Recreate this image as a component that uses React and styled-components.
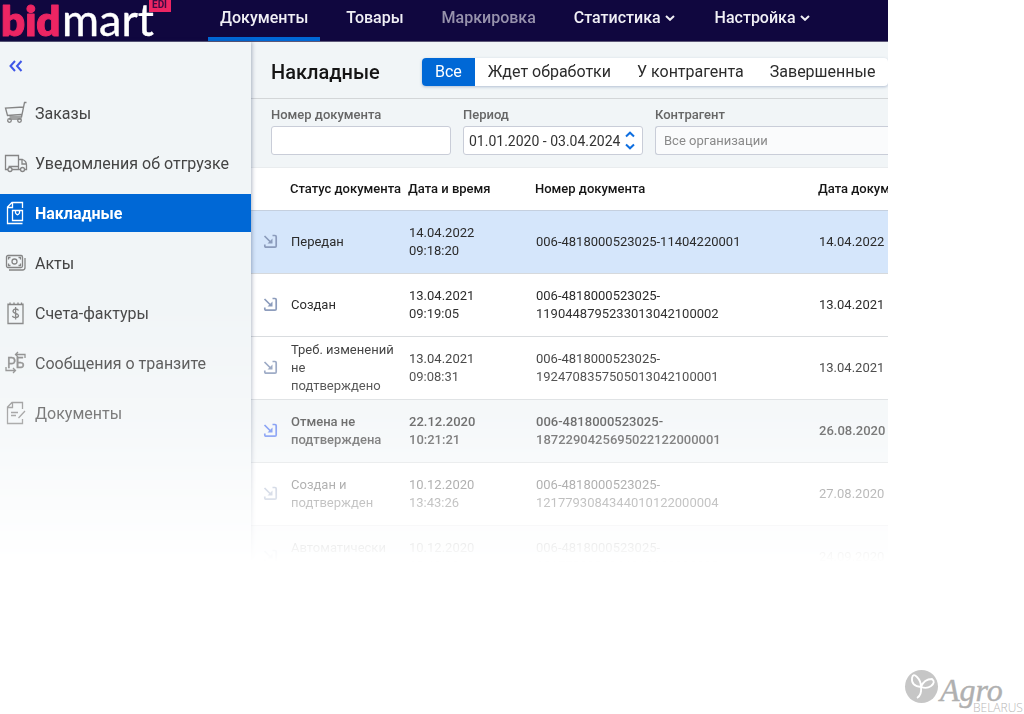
import React from "react";
import styled, { createGlobalStyle, css } from "styled-components";

const GlobalStyle = createGlobalStyle`
  *, *::before, *::after { box-sizing: border-box; }
  html, body { margin: 0; background: #fff; }
  body, button, input { font-family: Roboto, "Liberation Sans", sans-serif; }
  button { cursor: pointer; }
`;

const Page = styled.div`
  display: flex;
  flex-direction: column;
  min-height: 100vh;
  overflow: hidden;
`;

const Shell = styled.div`
  display: flex;
  flex-direction: column;
  height: 564px;
  margin-right: 136px;
  overflow: hidden;
  background: #fff;
  mask-image: linear-gradient(#000 300px, rgba(0, 0, 0, 0.85) 365px, rgba(0, 0, 0, 0.67) 425px, rgba(0, 0, 0, 0.32) 495px, transparent 562px);
`;

const TopBar = styled.header`
  display: flex;
  flex: none;
  height: 42px;
  background: #10073f;
  border-bottom: 1px solid #5d5878;
`;

const LogoLink = styled.a`
  flex: none;
  width: 208px;
  height: 41px;

  svg { display: block; overflow: visible; }
`;

const Nav = styled.nav`
  display: flex;
  gap: 14px;
`;

const NavLink = styled.a`
  display: flex;
  align-items: center;
  gap: 4px;
  height: 41px;
  padding: 0 ${(p) => (p.$menu ? "14px" : "12px")} 2px 12px;
  border-bottom: 4px solid ${(p) => (p.$active ? "#0068d6" : "transparent")};
  color: ${(p) => (p.$muted ? "#9792ac" : "#f0eff5")};
  font-size: 16px;
  font-weight: 500;
  text-decoration: none;
  white-space: nowrap;
`;

const Body = styled.div`
  display: flex;
  flex: 1;
  min-height: 0;
`;

const Sidebar = styled.aside`
  display: flex;
  flex-direction: column;
  flex: none;
  width: 251px;
  background: #f1f5f7;
  box-shadow: 1px 0 4px rgba(30, 50, 90, 0.35);
  z-index: 1;
`;

const CollapseButton = styled.button`
  display: flex;
  align-items: center;
  width: 36px;
  height: 48px;
  padding: 0 0 0 8px;
  border: 0;
  background: none;
  color: #3e56e8;
`;

const Menu = styled.nav`
  display: flex;
  flex-direction: column;
  gap: 12px;
  padding-top: 4px;
`;

const MenuLink = styled.a`
  display: flex;
  align-items: center;
  gap: 7px;
  height: 38px;
  padding-left: 4px;
  font-size: 16px;
  color: #444;
  text-decoration: none;
  white-space: nowrap;

  svg { flex: none; color: #858585; }

  ${(p) => p.$active && css`
    background: #0068d6;
    color: #fff;
    font-weight: 700;
    svg { color: #fff; }
  `}
`;

const Main = styled.main`
  flex: 1;
  min-width: 0;
  overflow: hidden;
`;

const TitleRow = styled.div`
  display: flex;
  align-items: center;
  height: 57px;
  padding: 3px 0 0 20px;
  background: #f1f5f7;
  border-bottom: 1px solid #d3d6d8;
`;

const Title = styled.h1`
  flex: none;
  width: 151px;
  margin: 0;
  font-size: 20px;
  font-weight: 500;
  color: #151515;
`;

const Segments = styled.div`
  display: flex;
  flex: 1;
  height: 28px;
  border-radius: 4px;
  background: #fff;
  box-shadow: 0 1px 3px rgba(60, 90, 140, 0.35);
  overflow: hidden;
`;

const Segment = styled.button`
  flex: none;
  padding: 0 13px;
  border: 0;
  background: ${(p) => (p.$active ? "#0068d6" : "transparent")};
  color: ${(p) => (p.$active ? "#fff" : "#2b2b2b")};
  font-size: 16px;
  white-space: nowrap;
`;

const Filters = styled.form`
  display: flex;
  gap: 12px;
  height: 69px;
  padding: 8px 0 0 20px;
  background: #f1f5f7;
  border-bottom: 1px solid #e9ecee;
`;

const Field = styled.div`
  display: flex;
  flex-direction: column;
  gap: 3px;
  flex: ${(p) => (p.$grow ? "1" : "none")};
  width: 180px;
  min-width: 0;
`;

const Label = styled.label`
  font-size: 13px;
  font-weight: 500;
  line-height: 16px;
  color: #666;
`;

const Box = styled.div`
  display: flex;
  align-items: center;
  height: 29px;
  border: 1px solid #c9cdd8;
  border-right-width: ${(p) => (p.$open ? "0" : "1px")};
  border-radius: ${(p) => (p.$open ? "3px 0 0 3px" : "3px")};
  background: ${(p) => (p.$open ? "#fafbfc" : "#fff")};
  overflow: hidden;
`;

const TextInput = styled.input`
  flex: 1;
  min-width: 0;
  height: 27px;
  padding: 0 0 0 ${(p) => (p.$wide ? "8px" : "5px")};
  border: 0;
  outline: 0;
  background: none;
  color: #333;
  font-size: ${(p) => (p.$wide ? "13px" : "14px")};

  &::placeholder { color: #8a8a8a; opacity: 1; }
`;

const Stepper = styled.div`
  display: flex;
  flex-direction: column;
  gap: 5px;
  padding-right: 7px;
`;

const StepButton = styled.button`
  display: flex;
  padding: 0;
  border: 0;
  background: none;
  color: #0f6fe0;
`;

const Table = styled.table`
  width: 760px;
  table-layout: fixed;
  border-collapse: collapse;
  font-size: 13px;
  line-height: 18px;
`;

const HeadCell = styled.th`
  width: ${(p) => (p.$width ? `${p.$width}px` : "auto")};
  height: 42px;
  padding: 0;
  text-align: left;
  font-weight: 500;
  color: #151515;
  white-space: nowrap;
`;

const Row = styled.tr`
  height: 63px;
  border-top: 1px solid ${(p) => (p.$tone === "selected" ? "#c5d0df" : "#d6d9dc")};
  background: ${(p) => ({ selected: "#d5e6fb", shaded: "#f1f5f7" }[p.$tone] || "#fff")};
  font-weight: ${(p) => (p.$strong ? 500 : 400)};
`;

const Cell = styled.td`
  padding: 0 12px 0 ${(p) => (p.$icon ? "12px" : "1px")};
  color: #2b2b2b;
  vertical-align: middle;

  svg { display: block; }
`;

const Watermark = styled.footer`
  display: flex;
  justify-content: flex-end;
  margin-top: auto;

  svg { display: block; overflow: visible; }
`;

function Logo() {
  return (
    <svg width="180" height="41" viewBox="0 0 180 41" role="img" aria-label="bidmart EDI">
      <text x="1" y="36" fill="#ec2563" stroke="#ec2563" strokeWidth="1" strokeLinejoin="round" fontFamily="Lato, sans-serif" fontSize="42" fontWeight="800">bid</text>
      <text x="62" y="36" fill="#fff" stroke="#fff" strokeWidth="0.4" strokeLinejoin="round" fontFamily="Lato, sans-serif" fontSize="45">mart</text>
      <rect x="149" y="-2" width="22" height="14" fill="#ec2563" />
      <text x="152" y="8" fill="#3d0a44" fontFamily="Roboto, sans-serif" fontSize="10" fontWeight="700">EDI</text>
    </svg>
  );
}

function Chevron({ up, small }) {
  return (
    <svg width="10" height={small ? 6 : 7} viewBox="0 0 10 6" fill="none" stroke="currentColor" strokeWidth="2">
      <path d={up ? "M1 5l4-3.800L9 5" : "M1 1l4 3.800L9 1"} />
    </svg>
  );
}

const iconPaths = {
  cart: (
    <>
      <path d="M22.500 1.500H20.500L17.500 16H5.500M19.500 6L1.500 7L3.500 14.500L17.500 13.500M5 18H17.500" />
      <circle cx="5.500" cy="19.500" r="1.800" /><circle cx="15.500" cy="19.500" r="1.800" />
    </>
  ),
  truck: (
    <>
      <path d="M4 18.500H1.500V4.500H14.500V18.500H8M14.500 8.500H18.500Q22.500 10 22.500 14V18.500H20.500M16.500 18.500H14.500M4.500 15.500H14.500M18 9V13H22" />
      <circle cx="6" cy="18.500" r="2" /><circle cx="18.500" cy="18.500" r="2" />
    </>
  ),
  invoice: (
    <>
      <path d="M18.500 7V1.500H8L3.500 6V22.500H18.500M8.500 1.500V6.500H3.500" />
      <path d="M8.500 9.500H18.500V19.500H8.500ZM11.500 9.500V12Q13.500 15.500 15.500 12V9.500" />
    </>
  ),
  money: (
    <>
      <rect x="2.500" y="4.500" width="16" height="12" rx="1.500" />
      <circle cx="10.500" cy="10.500" r="2.500" />
      <path d="M4.500 8.500V6.500H6.500M14.500 6.500H16.500V8.500M4.500 12.500V14.500H6.500M14.500 14.500H16.500V12.500M21 7V16.500Q21 19 18.500 19H5" />
    </>
  ),
  bill: (
    <>
      <path d="M4 2.500V22.500H19V2.500M4 3.500H19M6 1.500V3.500M10 1.500V3.500M14 1.500V3.500M17.500 1.500V3.500" />
      <path d="M14.500 9.500Q13.800 8 11.600 8T9 10Q9 11.700 11.600 12.300T14.500 14.500Q14.500 16.500 11.700 16.500T8.500 14.800M11.600 6V18.500" />
    </>
  ),
  note: (
    <>
      <path d="M18.500 8V1.500H8L3.500 6V22.500H18.500V18M8.500 1.500V6.500H3.500M7 11.500H14M7 14.500H12M21 10L14.500 17" />
    </>
  ),
};

function MenuIcon({ name }) {
  return (
    <svg width="24" height="24" viewBox="0 0 24 24" fill="none" stroke="currentColor" strokeWidth="1.3" overflow="visible">
      {name === "transit" ? (
        <>
          <text x="3" y="17" fill="currentColor" strokeWidth="0.4" fontFamily="Roboto, sans-serif" fontSize="14">РБ</text>
          <path d="M21 7V3.500H11.500M14 1L11.500 3.500L14 6M2 16V19.500H11.500M9 17L11.500 19.500L9 22" />
        </>
      ) : iconPaths[name]}
    </svg>
  );
}

function IncomingIcon({ bright }) {
  const color = bright ? "#4f74f0" : "#8b9bbb";
  return (
    <svg width="15" height="15" viewBox="0 0 15 15" fill="none" stroke={color} strokeWidth="1.700">
      <path d="M9.500 1.500H12Q13.200 1.500 13.200 2.700V12Q13.200 13.200 12 13.200H3Q1.800 13.200 1.800 12V10.500M1.500 2L8 8.500" />
      <path d="M9.500 4.500v5h-5z" fill={color} stroke="none" />
    </svg>
  );
}

const navItems = [
  { label: "Документы", active: true },
  { label: "Товары" },
  { label: "Маркировка", muted: true },
  { label: "Статистика", menu: true },
  { label: "Настройка", menu: true },
];

const menuItems = [
  ["cart", "Заказы"],
  ["truck", "Уведомления об отгрузке"],
  ["invoice", "Накладные"],
  ["money", "Акты"],
  ["bill", "Счета-фактуры"],
  ["transit", "Сообщения о транзите"],
  ["note", "Документы"],
];

const rows = [
  { status: "Передан", date: "14.04.2022", time: "09:18:20", number: ["006-4818000523025-11404220001"], docDate: "14.04.2022", tone: "selected" },
  { status: "Создан", date: "13.04.2021", time: "09:19:05", number: ["006-4818000523025-", "1190448795233013042100002"], docDate: "13.04.2021" },
  { status: "Треб. изменений не подтверждено", date: "13.04.2021", time: "09:08:31", number: ["006-4818000523025-", "1924708357505013042100001"], docDate: "13.04.2021" },
  { status: "Отмена не подтверждена", date: "22.12.2020", time: "10:21:21", number: ["006-4818000523025-", "1872290425695022122000001"], docDate: "26.08.2020", tone: "shaded", unread: true },
  { status: "Создан и подтвержден", date: "10.12.2020", time: "13:43:26", number: ["006-4818000523025-", "1217793084344010122000004"], docDate: "27.08.2020" },
  { status: "Автоматически подтвержден", date: "10.12.2020", time: "13:40:12", number: ["006-4818000523025-", "1217793084344010122000003"], docDate: "24.09.2020", tone: "shaded" },
];

export default function App() {
  return (
    <Page>
      <GlobalStyle />
      <Shell>
        <TopBar>
          <LogoLink href="#home"><Logo /></LogoLink>
          <Nav>
            {navItems.map((item) => (
              <NavLink key={item.label} href="#nav" $active={item.active} $muted={item.muted} $menu={item.menu}>
                {item.label}
                {item.menu && <Chevron small />}
              </NavLink>
            ))}
          </Nav>
        </TopBar>
        <Body>
          <Sidebar>
            <CollapseButton type="button" aria-label="Свернуть меню">
              <svg width="16" height="12" viewBox="0 0 16 12" fill="none" stroke="currentColor" strokeWidth="2">
                <path d="M7 1L2.500 6 7 11M13.500 1L9 6l4.500 5" />
              </svg>
            </CollapseButton>
            <Menu>
              {menuItems.map(([icon, label]) => (
                <MenuLink key={label} href="#section" $active={icon === "invoice"}>
                  <MenuIcon name={icon} />
                  {label}
                </MenuLink>
              ))}
            </Menu>
          </Sidebar>
          <Main>
            <TitleRow>
              <Title>Накладные</Title>
              <Segments>
                {["Все", "Ждет обработки", "У контрагента", "Завершенные"].map((label, i) => (
                  <Segment key={label} type="button" $active={i === 0}>{label}</Segment>
                ))}
              </Segments>
            </TitleRow>
            <Filters>
              <Field>
                <Label htmlFor="number">Номер документа</Label>
                <Box><TextInput id="number" type="text" /></Box>
              </Field>
              <Field>
                <Label htmlFor="period">Период</Label>
                <Box>
                  <TextInput id="period" type="text" defaultValue="01.01.2020 - 03.04.2024" />
                  <Stepper>
                    <StepButton type="button" aria-label="Вперёд"><Chevron up /></StepButton>
                    <StepButton type="button" aria-label="Назад"><Chevron /></StepButton>
                  </Stepper>
                </Box>
              </Field>
              <Field $grow>
                <Label htmlFor="partner">Контрагент</Label>
                <Box $open><TextInput id="partner" type="text" placeholder="Все организации" $wide /></Box>
              </Field>
            </Filters>
            <Table>
              <thead>
                <tr>
                  <HeadCell $width={39} aria-label="Направление" />
                  <HeadCell $width={118}>Статус документа</HeadCell>
                  <HeadCell $width={127}>Дата и время</HeadCell>
                  <HeadCell $width={283}>Номер документа</HeadCell>
                  <HeadCell>Дата документа</HeadCell>
                </tr>
              </thead>
              <tbody>
                {rows.map((row, i) => (
                  <Row key={i} $tone={row.tone} $strong={row.unread}>
                    <Cell $icon><IncomingIcon bright={row.unread} /></Cell>
                    <Cell>{row.status}</Cell>
                    <Cell>{row.date}<br />{row.time}</Cell>
                    <Cell>{row.number[0]}{row.number[1] && <><br />{row.number[1]}</>}</Cell>
                    <Cell>{row.docDate}</Cell>
                  </Row>
                ))}
              </tbody>
            </Table>
          </Main>
        </Body>
      </Shell>
      <Watermark>
        <svg width="120" height="46" viewBox="0 0 120 46" role="img" aria-label="Agro Belarus">
          <circle cx="17.500" cy="18.500" r="16.500" fill="#c6c6c6" />
          <path d="M13 30Q18 27 17 19Q7 18 8 10Q9 5 13 9Q17 13 17 19Q20 11 28 11Q32 14 27 18Q23 21 17 19" fill="none" stroke="#fff" strokeWidth="1.800" />
          <text x="36" y="33" fill="#b0b0b0" stroke="#b0b0b0" strokeWidth="0.4" fontFamily="'Liberation Serif', serif" fontSize="32" fontStyle="italic">Agro</text>
          <text x="69" y="44" fill="#b8b8b8" fontFamily="'Open Sans', sans-serif" fontSize="12" fontWeight="300">BELARUS</text>
        </svg>
      </Watermark>
    </Page>
  );
}
